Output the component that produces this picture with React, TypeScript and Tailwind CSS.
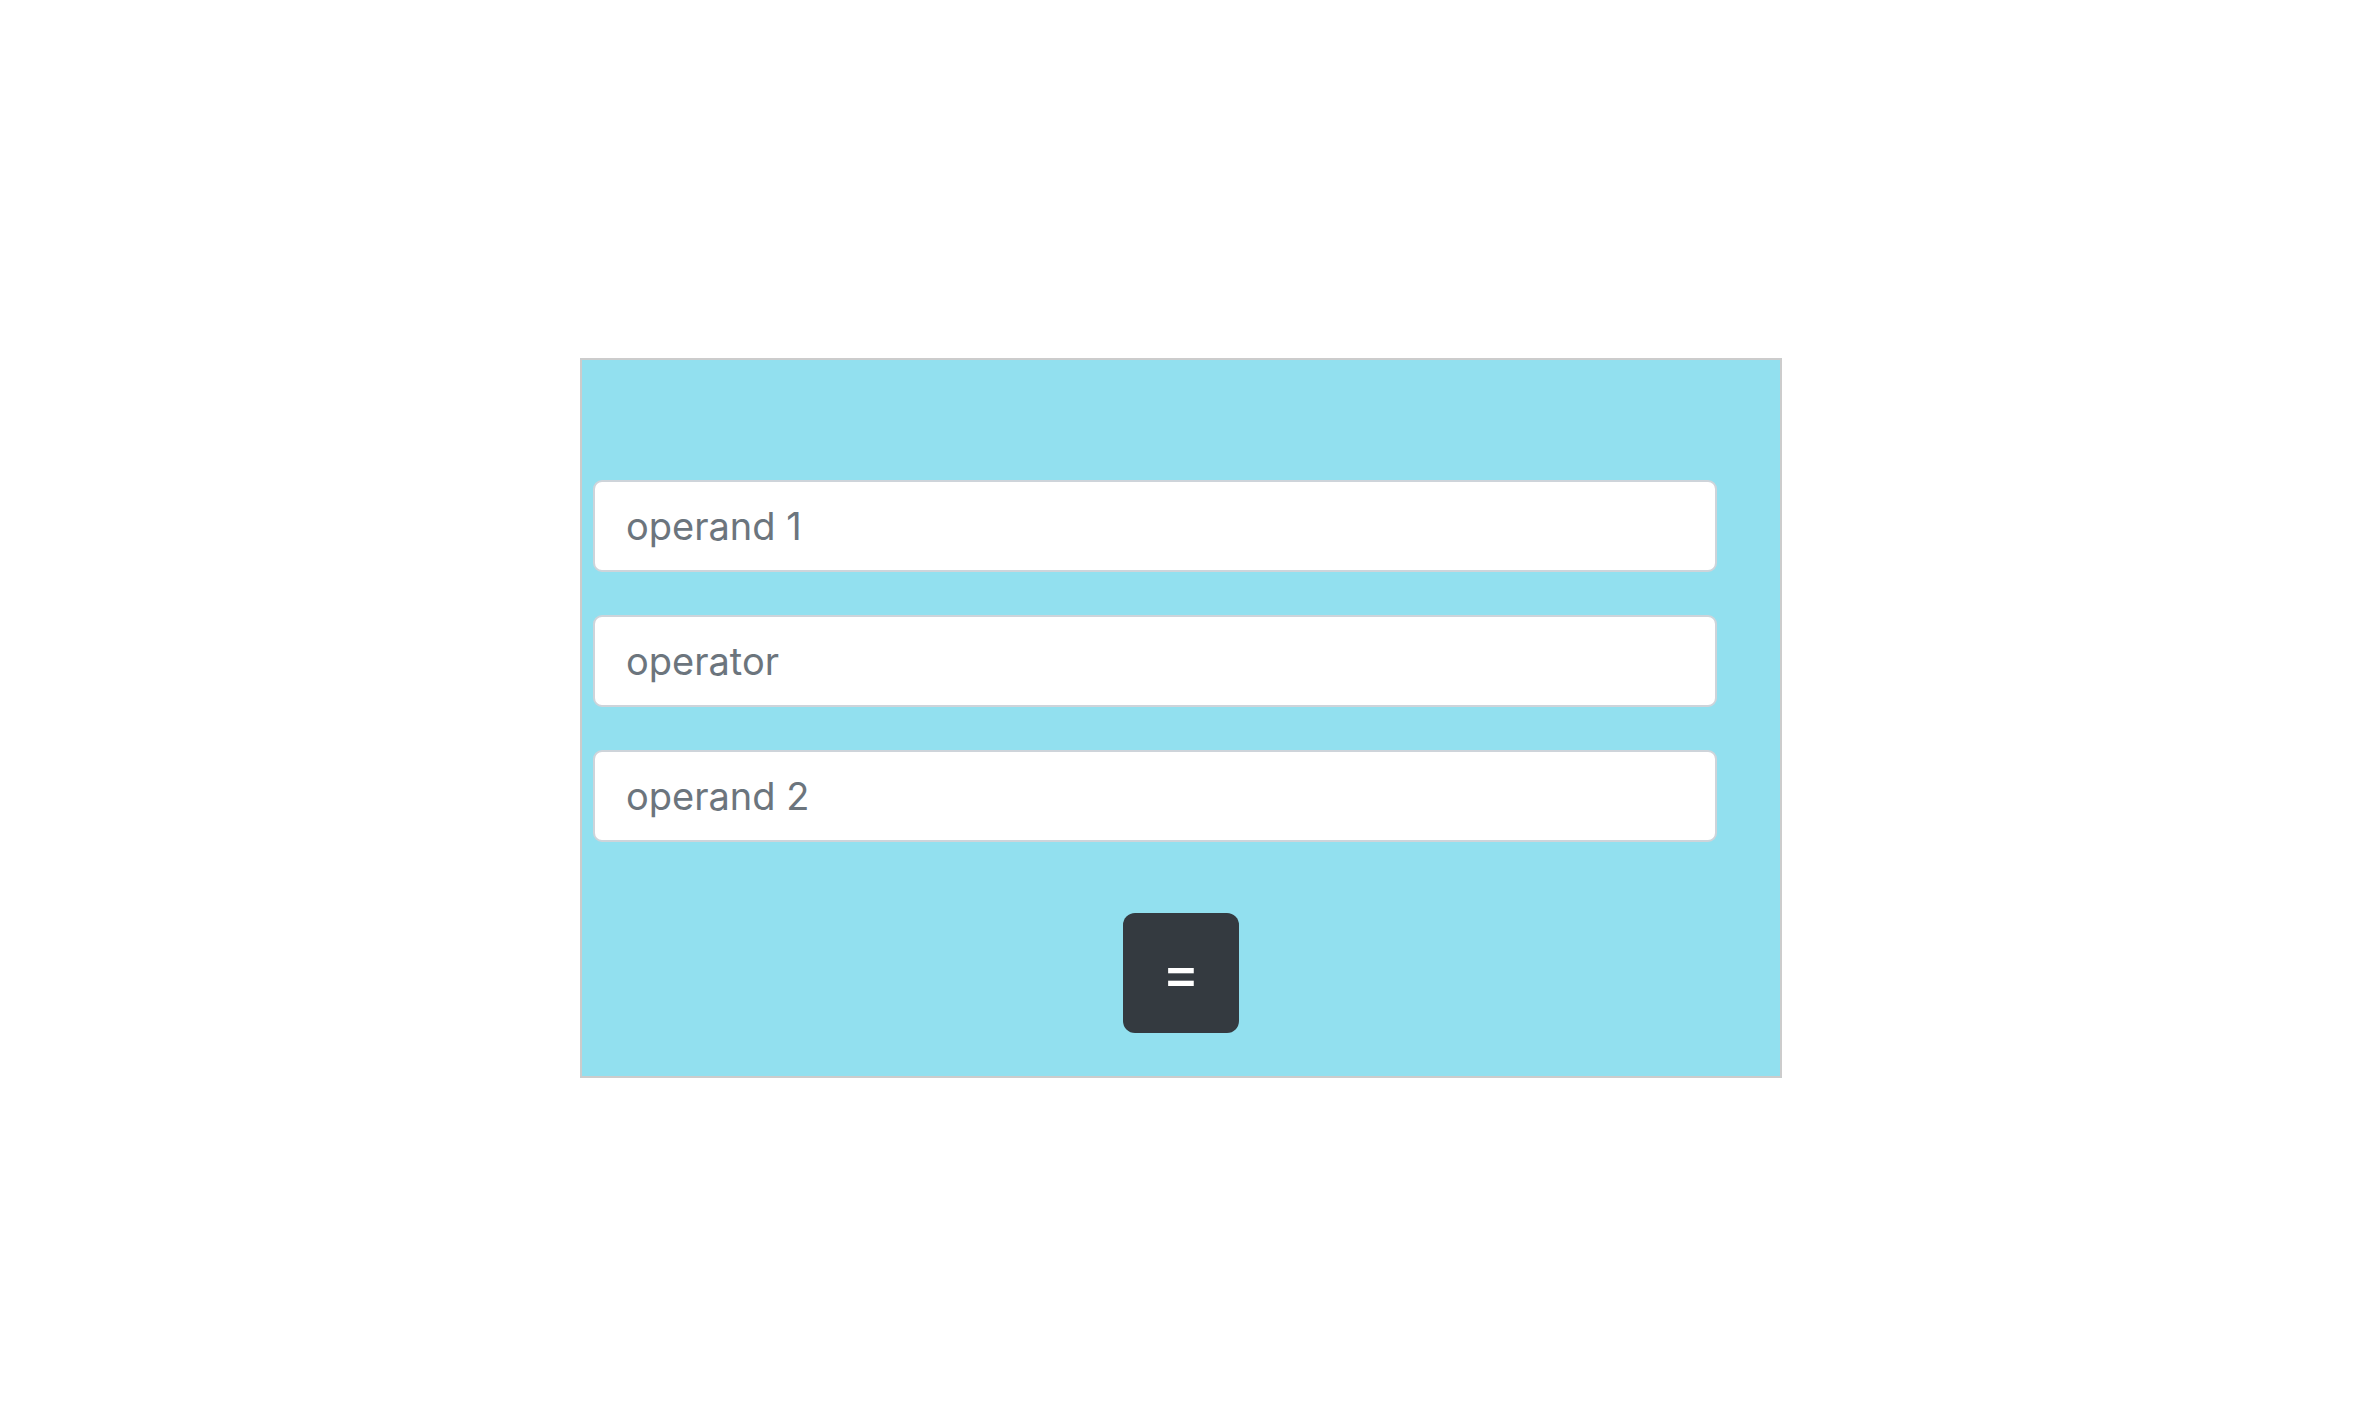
import { useState } from "react";

export default function App() {
  const [calc, setCalc] = useState({ op1: "", operator: "", op2: "" });

  const inputClass =
    "block w-[1124px] h-[92px] bg-white border-2 border-[#ced4da] rounded-[9px] px-[31px] text-[38px] text-[#495057] placeholder:text-[#6c757d] outline-none";

  return (
    <div className="min-h-[1418px] w-full bg-white pt-[358px] font-['Inter','Liberation_Sans',sans-serif]">
      <div className="mx-auto w-[1202px] h-[720px] border-2 border-[#cccccc] bg-[#92e0ef] pt-[120px] pl-[11px]">
        <div className="flex flex-col gap-[43px]">
          <input
            className={inputClass}
            placeholder="operand 1"
            value={calc.op1}
            onChange={(e) => setCalc({ ...calc, op1: e.target.value })}
          />
          <input
            className={inputClass}
            placeholder="operator"
            value={calc.operator}
            onChange={(e) => setCalc({ ...calc, operator: e.target.value })}
          />
          <input
            className={inputClass}
            placeholder="operand 2"
            value={calc.op2}
            onChange={(e) => setCalc({ ...calc, op2: e.target.value })}
          />
        </div>
        <div className="flex justify-center mt-[71px] pr-[11px]">
          <button
            type="button"
            className="w-[116px] h-[120px] rounded-[12px] bg-[#343a40] text-white text-[56px] font-medium leading-none flex items-center justify-center"
          >
            =
          </button>
        </div>
      </div>
    </div>
  );
}
